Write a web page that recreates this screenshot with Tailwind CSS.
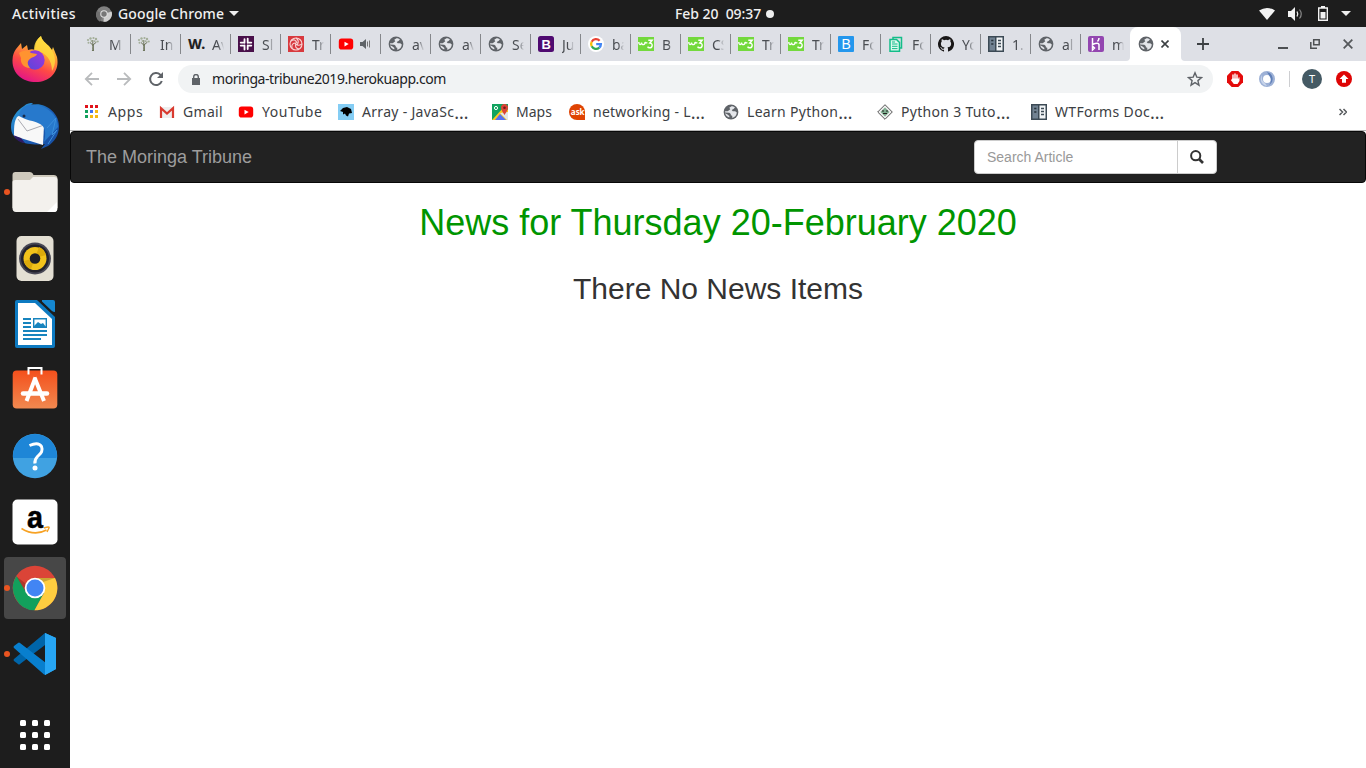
<!DOCTYPE html>
<html lang="en">
<head>
<meta charset="utf-8">
<title>The Moringa Tribune</title>
<script src="https://cdn.jsdelivr.net/npm/@tailwindcss/browser@4"></script>
</head>
<body class="w-[1366px] h-[768px] overflow-hidden bg-white font-['Noto_Sans',sans-serif]">
<svg class="hidden">
  <defs>
    <symbol id="globe" viewBox="0 0 16 16"><circle cx="8" cy="8" r="7.400" fill="#5f6368"/><path d="M8.500 2.200 6.300 3.700l1 1.500-2.600 2.100H2.100v1.200l4.200.2 1.500 1.200v1.300l1.400.6.200 2.100c2.600-.6 4.300-2.700 4.400-5.300l-1.600-1.300H9.700L8.700 6.100l1.800-1 1.500-1.600C11 2.700 9.700 2.200 8.500 2.200Z" fill="#e4e6ea"/><path d="M2.200 9.300c.5 2 1.900 3.600 4 4.300l.2-1.600-1.900-1.500Z" fill="#e4e6ea"/></symbol>
    <symbol id="tree" viewBox="0 0 16 16"><path d="M7.300 15c.8-2 .7-4 .4-6L5 6.500M8 9l3.500-3M7.800 9V4M8.500 15c-.4-2-.3-4-.2-6" stroke="#5c6547" stroke-width=".9" fill="none"/><g fill="#a3ae99"><circle cx="3" cy="4" r="1.100"/><circle cx="5.500" cy="2.500" r="1.200"/><circle cx="8.500" cy="2" r="1.100"/><circle cx="11" cy="3" r="1.200"/><circle cx="12.800" cy="5.500" r="1"/><circle cx="3.500" cy="6.800" r="1"/><circle cx="6.500" cy="5" r="1"/><circle cx="9.700" cy="5.300" r="1"/></g></symbol>
    <symbol id="yt" viewBox="0 0 16 16"><rect x=".8" y="2.600" width="14.400" height="11" rx="2.800" fill="#f00"/><path d="m6.500 5.800 4.200 2.300-4.200 2.300Z" fill="#fff"/></symbol>
    <symbol id="w3" viewBox="0 0 16 16"><rect y="1" width="16" height="14" fill="#73d93c"/><path d="M.8 6c0 3.300 2.300 3.500 2.700.5.300 3 3.600 2.800 3.600-.5Q7.800 7.500 9.300 6.500M10.300 4.200h3.900L11.800 7c3.600.2 2.800 5-.4 4.800-1 0-1.500-.5-1.800-1.200" stroke="#fff" stroke-width="1.400" fill="none"/></symbol>
    <symbol id="wtf" viewBox="0 0 16 16"><path d="M0 0h16v16H0Z" fill="#3c4a55"/><path d="M1.500 1.500h5.500v13H1.500Z" fill="#718292"/><path d="M8.500 1.500h6v13h-6Z" fill="#f1f4f6"/><path d="M3.200 4.500h2.200M3.200 8h2.200" stroke="#27323b" stroke-width="1.400"/><path d="M10 4.500h3M10 7.500h3M10 10.500h3" stroke="#3c4a55" stroke-width="1.500"/></symbol>
  </defs>
</svg>

<!-- system bar -->
<header class="flex h-[27px] items-center bg-[#1d1d1d] text-[14px] font-medium text-[#f0f0f0]">
  <span class="ml-3 w-[84px] pb-px tracking-[0.35px]">Activities</span>
  <svg class="size-4 shrink-0" viewBox="0 0 16 16"><circle cx="8" cy="8" r="7.700" fill="#818181"/><path d="M8 8 15.600 5.500A7.700 7.700 0 0 1 7.500 15.700Z" fill="#cfcfcf"/><path d="M8 8 4 15.700A7.700 7.700 0 0 1 1 5Z" fill="#707070"/><circle cx="8" cy="8" r="3.800" fill="#ddd"/><circle cx="8" cy="8" r="2.700" fill="#777"/></svg>
  <span class="ml-[6px] w-[107px] whitespace-nowrap pb-px tracking-[0.12px]">Google Chrome</span>
  <svg class="ml-1 h-[5px] w-[10px]" viewBox="0 0 10 5"><path d="M0 0h10L5 5Z" fill="#eee"/></svg>
  <span class="ml-[436px] w-[91px] whitespace-pre pb-px tracking-[-0.05px]">Feb 20  09:37</span>
  <i class="size-2 rounded-full bg-[#eee]"></i>
  <svg class="ml-[485px] h-[12px] w-[16px]" viewBox="0 0 16 12"><path d="M0 2.500Q8-2.500 16 2.500L8 12Z" fill="#f2f2f2"/></svg>
  <svg class="ml-[13px] h-[14px] w-[16px]" viewBox="0 0 16 14"><path d="M0 4h3l4-4v14L3 10H0Z" fill="#f2f2f2"/><path d="M9 4.500q1.500 2.500 0 5" stroke="#eee" fill="none" stroke-width="1.300"/><path d="M11.500 2.500q3.500 4.500 0 9" stroke="#888" fill="none" stroke-width="1.200"/></svg>
  <svg class="ml-[14px] h-[15px] w-[10px]" viewBox="0 0 10 15"><path d="M.7 2h8.600v12.300H.7Z" stroke="#f2f2f2" stroke-width="1.400" fill="none"/><path d="M3 0h4v2H3ZM2.500 6h5v6.500h-5Z" fill="#f2f2f2"/></svg>
  <svg class="ml-[13px] h-[5px] w-[10px]" viewBox="0 0 10 5"><path d="M0 0h10L5 5Z" fill="#eee"/></svg>
</header>

<div class="flex h-[741px]">
  <!-- dock -->
  <aside class="flex w-[70px] shrink-0 flex-col bg-[#1d1d1d] [&>div]:relative [&>div]:flex [&>div]:h-[66px] [&>div]:items-center [&>div]:justify-center [&_i]:absolute [&_i]:left-1 [&_i]:size-[6px] [&_i]:rounded-full [&_i]:bg-[#e95420]">
    <div><svg class="size-12" viewBox="0 0 48 48"><defs><linearGradient id="ff" x1=".8" y1="0" x2=".35" y2="1"><stop stop-color="#fff44f"/><stop offset=".35" stop-color="#ffa436"/><stop offset=".65" stop-color="#ff4a45"/><stop offset="1" stop-color="#e31587"/></linearGradient><linearGradient id="ff2" x1="0" x2="1" y1="1" y2="0"><stop stop-color="#5547dd"/><stop offset="1" stop-color="#a535d8"/></linearGradient></defs><path d="M5 13 10 7l1 6 5-4 1 5c3-1 5-1 7 0 0-7 2-11 6-14 1 5 5 7 8 10l3 4 1-3 4 10c3 14-7 25-21 25S1 37 1.500 24C1.700 19 3 16 5 13Z" fill="url(#ff)"/><path d="M23 14c0-7 3-11 7-14 1 5 5 7 8 11 8 8 7 18 3 24 0-10-5-19-18-21Z" fill="#ffdc3d" opacity=".8"/><circle cx="24" cy="24" r="9.700" fill="url(#ff2)"/><path d="M8 17c4-3 9-3 12 0l6 1c-1 3-5 3-7 5-3 2-3 5 0 9-7 0-10-6-9-10Z" fill="#ff9330"/></svg></div>
    <div><svg class="size-12" viewBox="0 0 48 48"><defs><linearGradient id="tb" x1="0" x2="1" y1="0" y2="1"><stop stop-color="#2fa5dd"/><stop offset=".5" stop-color="#1b5fb8"/><stop offset="1" stop-color="#164a9c"/></linearGradient></defs><path d="M13 4c3-3 6-3 9-3l-2 2C33-1 48 10 48 24c0 10-5 16-11 20l-7 3 4-5C20 44 0 41 0 25 0 16 6 8 13 4Z" fill="url(#tb)"/><path d="M6 15c6-4 18-3 27 8l-1 20L3 34C3 25 3 20 6 15Z" fill="#f8f8f8"/><path d="M7 17 16 29l17-6" stroke="#a8a8b0" fill="none"/><path d="M8 14C9 5 17 1 25 3c12 2 22 10 22 22L33 40c2-8 2-15-4-18-7-4-13-3-21-8Z" fill="#2779cc"/><circle cx="13" cy="14" r="1.500" fill="#172a4b"/><path d="M2 33q5 8 12 8l-4-5Z" fill="#2d1a63"/><path d="m36 26 9-10-4 17 5-5-9 14" stroke="#3b8fdc" fill="none"/></svg></div>
    <div><i></i><svg class="size-12" viewBox="0 0 48 48"><path d="M1.500 7q0-3 3-3h14q3 0 4 3h20q4 0 4 4v29h-45Z" fill="#cec9bc"/><path d="M1.500 14q0-2 3-2H19l3-3h21q3.500 0 3.500 3v28q0 4-3.500 4H5q-3.500 0-3.500-4Z" fill="#f3f1ed"/><path d="M36 44h7q3 0 3-3v-7Z" fill="#fff"/></svg></div>
    <div><svg class="size-12" viewBox="0 0 48 48"><rect x="5.500" y="2" width="37" height="45" rx="5" fill="#e3dfd3"/><circle cx="24" cy="24.500" r="15.900" fill="#474754"/><circle cx="24" cy="24.500" r="14" fill="#22222c"/><circle cx="24" cy="24.500" r="11.500" fill="#f2c21b"/><path d="m24 24-11 3a11.500 11.500 0 0 0 7 8Zm0 0 11-3a11.500 11.500 0 0 0-7-8Z" fill="#dcaa0c"/><circle cx="24" cy="24.500" r="5.300" fill="#202027"/></svg></div>
    <div><svg class="size-12" viewBox="0 0 48 48"><path d="M6 0h20l18 17v29q0 2-2 2H6q-2 0-2-2V2q0-2 2-2Z" fill="#0d7ac1"/><path d="M7 3h17l17 16v26H7Z" fill="#fff"/><path d="M31 0h11q2 0 2 2v10q-2 0-3-1L31 1.500Z" fill="#1587d0"/><path d="M12 19h8m-8 4h8m-8 4h8m-8 4h24m-24 4h24m-24 4h18" stroke="#1784be" stroke-width="2"/><path d="M22.700 18.700h12.600v8.600H22.700Z" stroke="#1784be" stroke-width="1.400" fill="none"/><path d="m23 26 4-4 3 2 2-1 3 4H23Z" fill="#1784be"/></svg></div>
    <div><svg class="size-12" viewBox="0 0 48 48"><defs><linearGradient id="sw" x2="0" y2="1"><stop stop-color="#f4501c"/><stop offset="1" stop-color="#f18950"/></linearGradient></defs><rect x="1.700" y="4.500" width="44.600" height="38" rx="4" fill="url(#sw)"/><path d="M17.500 8.500V2h13v6.500" stroke="#fff" stroke-width="2" fill="none"/><path d="M24.500 11.500 15.500 35m8-23.500L33 35" stroke="#fff" stroke-width="4"/><path d="M12 27.500h24" stroke="#fff" stroke-width="4.500" stroke-linecap="round"/></svg></div>
    <div><svg class="size-12" viewBox="0 0 48 48"><circle cx="24" cy="24" r="22.200" fill="#40a2e2"/><path d="M2 24a22 22 0 0 1 44 0l-.5 2H2.200Z" fill="#1e86d7"/><path d="M18.500 13.500q9-4 12 1c2 5-1 7-4 10-2 2-3 4-2.500 7" stroke="#fff" stroke-width="3" fill="none"/><circle cx="24" cy="36" r="2.500" fill="#fff"/></svg></div>
    <div><svg class="size-12" viewBox="0 0 48 48"><rect x="1.500" y="1.500" width="45" height="45" rx="5" fill="#fff"/><text x="16" y="29.500" font-family="Liberation Sans" font-size="31" font-weight="700" textLength="16" lengthAdjust="spacingAndGlyphs" stroke="#000" stroke-width=".5">a</text><path d="M10.500 30.500q13 8 25 1.500" stroke="#f7a224" stroke-width="1.600" fill="none"/><path d="M33 30q6-2 5 0l-2 4" stroke="#f7a224" stroke-width="1.400" fill="none"/></svg></div>
    <div><span class="flex size-[62px] items-center justify-center rounded-[4px] bg-[#474747]"><svg class="size-12" viewBox="0 0 48 48"><circle cx="24" cy="24" r="22.300" fill="#db4437"/><path d="M5.500 12A22.300 22.300 0 0 0 23.500 46.300L33 29 15.500 29Z" fill="#12a05c"/><path d="M24 14h20a22.300 22.300 0 0 1-20.500 32.300L33 29Z" fill="#fecd40"/><path d="M5.500 12.500 15.500 29l1-8ZM24 14h20l-12 4Z" fill="#0003"/><circle cx="24" cy="24" r="10.300" fill="#fff"/><circle cx="24" cy="24" r="8.500" fill="#4285f4"/></svg></span><i></i></div>
    <div><i></i><svg class="size-12" viewBox="0 0 48 48"><path d="M34 3v12L9 34q-1 1-2 0l-4-3q-1-1 0-2Z" fill="#0065a9"/><path d="M34 3 45 8v31l-11 6Z" fill="#27a6f4"/><path d="M35 45V33L9 13q-1-1-2 0l-4 3q-1 1 0 2L33 44.500Z" fill="#087fce"/><path d="M34 3 45 8v31l-11 6Z" fill="#27a6f4"/></svg></div>
    <div class="mt-[15px]"><span class="grid grid-cols-3 gap-[6px] [&>b]:size-[6px] [&>b]:rounded-[1.500px] [&>b]:bg-white"><b></b><b></b><b></b><b></b><b></b><b></b><b></b><b></b><b></b></span></div>
  </aside>

  <main class="w-[1296px]">
    <!-- tab strip -->
    <nav class="flex h-[34px] items-center bg-[#dee0e6] pl-[11px] text-[14px] text-[#4a4d52] [&>div]:flex [&>div]:h-5 [&>div]:w-[50px] [&>div]:shrink-0 [&>div]:items-center [&>div]:border-r [&>div]:border-[#85878b] [&>div]:pl-[7px] [&>div>svg]:size-4 [&>div>svg]:shrink-0 [&>div>span]:ml-2 [&>div>span]:w-[12px] [&>div>span]:overflow-hidden [&>div>span]:whitespace-nowrap [&>div>span]:mask-r-from-50% [&>div>span]:mask-r-to-100%">
      <div><svg class="-ml-[3px]"><use href="#tree"/></svg><span class="min-w-[14px]">M</span></div>
      <div><svg class="-ml-[2px]"><use href="#tree"/></svg><span class="min-w-[14px]">In</span></div>
      <div><b class="w-4 text-[14px] font-extrabold leading-none text-[#222]">W.</b><span>Av</span></div>
      <div><svg viewBox="0 0 16 16"><path d="M0 0h16v16H0Z" fill="#49104a"/><path d="M6.500 3.200v3.600M9.700 2.600v4.200M6.500 9.500v4M9.700 9.500v3.600M2.700 6.600h3.800M9.700 6.600h3.600M2.700 9.600h3.800M9.700 9.600h3.600" stroke="#fff" stroke-width="1.800" stroke-linecap="round"/></svg><span>Sl</span></div>
      <div><svg viewBox="0 0 16 16"><path d="M0 0h16v16H0Z" fill="#d8393e"/><g fill="none" stroke="#f8d3d3" stroke-width="1.100"><circle cx="8" cy="8" r="6"/><path d="M8 2q4 3 1 7M14 8q-5 3-7-1M11 13q-5-1-3-6M4 12q-1-5 4-5M3 5q4-3 6 2"/></g></svg><span>Tr</span></div>
      <div><svg><use href="#yt"/></svg><svg class="ml-[5px]" viewBox="0 0 16 16"><path d="M1 6h2.500L7 3v10L3.500 10H1Z" fill="#5f6368"/><path d="M8.500 5.500v5m2-6v7" stroke="#777"/></svg></div>
      <div><svg><use href="#globe"/></svg><span>av</span></div>
      <div><svg><use href="#globe"/></svg><span>av</span></div>
      <div><svg><use href="#globe"/></svg><span>Se</span></div>
      <div><svg viewBox="0 0 16 16"><rect width="16" height="16" rx="2.500" fill="#4f0a70"/><text x="3.400" y="12.800" font-family="Liberation Sans" font-size="13" font-weight="700" fill="#fff">B</text></svg><span>Ju</span></div>
      <div><svg viewBox="0 0 16 16"><circle cx="8" cy="8" r="8" fill="#fff"/><g fill="none" stroke-width="2.300"><path d="M11.600 4.700A4.900 4.900 0 0 0 3.700 5.700" stroke="#ea4335"/><path d="M3.700 5.700a4.900 4.900 0 0 0 0 4.600" stroke="#fbbc05"/><path d="M3.700 10.300a4.900 4.900 0 0 0 7.600 1.300" stroke="#34a853"/><path d="M11.300 11.600A4.900 4.900 0 0 0 12.900 8.100H8.200" stroke="#4285f4"/></g></svg><span>ba</span></div>
      <div><svg><use href="#w3"/></svg><span>B</span></div>
      <div><svg><use href="#w3"/></svg><span>CS</span></div>
      <div><svg><use href="#w3"/></svg><span>Tr</span></div>
      <div><svg><use href="#w3"/></svg><span>Tr</span></div>
      <div><svg viewBox="0 0 16 16"><rect width="16" height="16" rx="1" fill="#2497ed"/><text x="3.500" y="13" font-family="Liberation Sans" font-size="14" fill="#fff">B</text></svg><span>Fo</span></div>
      <div><svg viewBox="0 0 16 16"><path d="M5 3V1.500h8.500V12H12" stroke="#13bd89" stroke-width="1.500" fill="none"/><path d="M2 3.500h6.500l3 3v8.700H2Z" stroke="#13bd89" stroke-width="1.500" fill="#dff8ee"/><path d="M4 8h5.500M4 10.300h5.500M4 12.600h5.500M4 6h3" stroke="#13bd89"/></svg><span>Fo</span></div>
      <div><svg viewBox="0 0 16 16"><path d="M8 0a8 8 0 0 0-2.530 15.590c.4.070.55-.17.55-.38v-1.490c-2.230.48-2.700-.95-2.700-.95-.36-.92-.89-1.170-.89-1.170-.73-.5.060-.49.060-.49.800.060 1.230.83 1.230.83.710 1.220 1.870.87 2.330.66.070-.52.280-.87.510-1.070-1.780-.2-3.640-.89-3.640-3.950 0-.87.310-1.590.82-2.150-.08-.2-.36-1.020.08-2.120 0 0 .67-.21 2.200.82a7.600 7.600 0 0 1 4 0c1.530-1.040 2.200-.82 2.200-.82.440 1.100.160 1.920.080 2.120.510.560.820 1.270.820 2.150 0 3.070-1.870 3.750-3.650 3.950.290.250.540.730.540 1.480v2.200c0 .210.150.460.550.380A8 8 0 0 0 8 0Z" fill="#191717"/></svg><span>Yo</span></div>
      <div><svg><use href="#wtf"/></svg><span>1.</span></div>
      <div><svg><use href="#globe"/></svg><span>al</span></div>
      <section class="flex h-5 w-[49px] shrink-0 items-center pl-[7px]"><svg class="size-4 shrink-0" viewBox="0 0 16 16"><rect width="16" height="16" rx="2" fill="#9346b0"/><path d="M4.500 2v6.500q6-2.500 6.500 0V14M11 2q0 2-1.500 3.500M4.500 10v4l2-2Z" stroke="#fff" stroke-width="1.500" fill="none"/></svg><span class="ml-2 w-3 overflow-hidden mask-r-from-50% mask-r-to-100%">m</span></section>
      <section class="relative flex h-[34px] w-[51px] shrink-0 items-center rounded-t-[8px] bg-white pl-2">
        <svg class="absolute -left-1 bottom-0 size-1" viewBox="0 0 4 4"><path d="M4 0v4H0Q4 4 4 0Z" fill="#fff"/></svg><svg class="absolute -right-1 bottom-0 size-1" viewBox="0 0 4 4"><path d="M0 0v4h4Q0 4 0 0Z" fill="#fff"/></svg>
        <svg class="size-4"><use href="#globe"/></svg><svg class="ml-[7px] size-2" viewBox="0 0 8 8"><path d="m.5.500 7 7m0-7-7 7" stroke="#3c4043" stroke-width="1.600"/></svg>
      </section>
      <svg class="ml-4 size-3 shrink-0" viewBox="0 0 12 12"><path d="M6 0v12M0 6h12" stroke="#3c4043" stroke-width="1.800"/></svg>
      <svg class="ml-[69px] h-[10px] w-[10px] shrink-0" viewBox="0 0 10 10"><path d="M0 9h10" stroke="#4d5053" stroke-width="2"/></svg>
      <svg class="ml-[22px] h-[10px] w-[10px] shrink-0" viewBox="0 0 10 10"><path d="M3.700.8h5.500v5H3.700ZM.8 3v6.200H7" stroke="#4d5053" stroke-width="1.500" fill="none"/></svg>
      <svg class="ml-[23px] size-[10px] shrink-0" viewBox="0 0 10 10"><path d="m.7.700 8.600 8.600m0-8.600L.7 9.300" stroke="#55585b" stroke-width="1.800"/></svg>
    </nav>
    <!-- address bar -->
    <div class="flex h-9 items-center pl-[14px]">
      <svg class="size-4 shrink-0" viewBox="0 0 16 16"><path d="M15 8H2m6-6.200L1.800 8 8 14.200" stroke="#b9bbbd" stroke-width="1.800" fill="none"/></svg>
      <svg class="ml-4 size-4 shrink-0" viewBox="0 0 16 16"><path d="M1 8h13M8 1.800 14.200 8 8 14.200" stroke="#b9bbbd" stroke-width="1.800" fill="none"/></svg>
      <svg class="ml-4 size-4 shrink-0" viewBox="0 0 16 16"><path d="M13.800 10A6 6 0 1 1 12.300 3.700L14 5.500" stroke="#5f6368" stroke-width="2" fill="none"/><path d="M15 1v6H9Z" fill="#5f6368"/></svg>
      <div class="ml-[14px] flex h-7 w-[1035px] shrink-0 items-center rounded-full bg-[#f1f3f4] pl-[14px] pr-[10px]">
        <svg class="h-[11px] w-[8px]" viewBox="0 0 8 11"><path d="M0 4h8v7H0Z" fill="#5f6368"/><path d="M1.700 4V2.800a2.300 2.300 0 0 1 4.600 0V4" stroke="#5f6368" stroke-width="1.400" fill="none"/></svg>
        <span class="ml-3 pb-[2px] text-[14px] tracking-[-0.44px] text-[#202124]">moringa-tribune2019.herokuapp.com</span>
        <svg class="ml-auto size-4" viewBox="0 0 16 16"><path d="m8 1.800 1.800 4.300 4.700.4-3.600 3.100 1.100 4.600L8 11.700l-4 2.500 1.100-4.600-3.600-3.100 4.700-.4Z" stroke="#5f6368" stroke-width="1.400" fill="none"/></svg>
      </div>
      <svg class="ml-[14px] size-4 shrink-0" viewBox="0 0 16 16"><path d="M4.700 0h6.600L16 4.700v6.600L11.300 16H4.700L0 11.300V4.700Z" fill="#e40b0b"/><path d="M6 8V4M8 8V3M10 8V4" stroke="#fff" stroke-width="1.400" stroke-linecap="round"/><path d="M5.300 7.500h6.400V6l.8.500v3.500l-2 3H6.800L3.800 9l.8-.5Z" fill="#fff"/></svg>
      <svg class="ml-4 size-4 shrink-0" viewBox="0 0 16 16"><circle cx="8" cy="8" r="6" stroke="#9db1d6" stroke-width="4" fill="#fff"/><path d="M8 1a7 7 0 0 1 2 13q3-4 1-8Z" fill="#5f7fb8"/><path d="M8 15a7 7 0 0 1-5-11q-1 6 3 8Z" fill="#c7d4ea"/></svg>
      <span class="ml-[14px] h-4 w-px bg-[#cdced1]"></span>
      <span class="ml-3 flex size-5 items-center justify-center rounded-full bg-[#455a64] text-[11px] text-white">T</span>
      <svg class="ml-[14px] size-4 shrink-0" viewBox="0 0 16 16"><circle cx="8" cy="8" r="8" fill="#de0505"/><path d="m8 3.500 4.500 4.500H10v3.700H6V8H3.500Z" fill="#fff"/></svg>
    </div>
    <!-- bookmarks -->
    <div class="flex h-[34px] items-center border-b border-[#b5b5b5] pb-1 pl-[14px] text-[14px] text-[#3c4043] [&>div]:flex [&>div]:items-center [&>div]:whitespace-nowrap [&>div>svg]:mr-2 [&>div>svg]:size-4 [&>div>svg]:shrink-0 [&_b]:text-[18px] [&_b]:font-normal [&_b]:leading-5">
      <div class="w-[75px] tracking-[0.6px]"><svg viewBox="0 0 16 16"><path d="M1 1h3v3H1Zm5 0h3v3H6Zm5 0h3v3h-3Z" fill="#e0131b"/><path d="M1 6h3v3H1Zm0 5h3v3H1Z" fill="#12a05c"/><path d="M6 6h3v3H6Z" fill="#4272f0"/><path d="M11 6h3v3h-3ZM6 11h3v3H6Zm5 0h3v3h-3Z" fill="#f5b912"/></svg>Apps</div>
      <div class="w-[79px] tracking-[0.3px]"><svg viewBox="0 0 16 16"><path d="M1 3h14v11H1Z" fill="#eee"/><path d="M2 14V4.200l6 5.300 6-5.300V14" stroke="#d93a2f" stroke-width="2.200" fill="none"/></svg>Gmail</div>
      <div class="w-[100px] tracking-[0.55px]"><svg><use href="#yt"/></svg>YouTube</div>
      <div class="w-[154px] tracking-[0.3px]"><svg viewBox="0 0 16 16"><path d="M0 0h16v16H0Z" fill="#84cdf4"/><path d="m2 7 3-3 4-1 4 2 1 4-3 .5-1 3-2-1-1-2-2 1V8Z" fill="#000"/></svg>Array - JavaSc<b>…</b></div>
      <div class="w-[77px]"><svg viewBox="0 0 16 16"><path d="M0 0h16v16H0Z" fill="#10a35e"/><path d="M0 16 12 3l4 3v10Z" fill="#fbc81f"/><path d="m3 16 5-6 6 6Z" fill="#566ff1"/><path d="m8 9 7 7h1V8Z" fill="#e4e6e8"/><path d="M12.500 0a3.500 3.500 0 0 1 3.500 4q-.5 3-3.500 7Q9.500 7 9 4a3.500 3.500 0 0 1 3.500-4Z" fill="#dc4437"/><circle cx="12.500" cy="3.800" r="1.300" fill="#6f1a18"/><circle cx="4" cy="4" r="1.600" stroke="#fff" fill="none"/></svg>Maps</div>
      <div class="w-[154px] tracking-[0.25px]"><svg viewBox="0 0 16 16"><path d="M8 0a8 8 0 0 1 8 8v8H8A8 8 0 0 1 8 0Z" fill="#df4303"/><text x="1.800" y="10.800" font-family="Open Sans" font-weight="700" font-size="8" letter-spacing="0" fill="#fff">ask</text></svg>networking - L<b>…</b></div>
      <div class="w-[154px] tracking-[0.3px]"><svg><use href="#globe"/></svg>Learn Python<b>…</b></div>
      <div class="w-[154px] tracking-[0.3px]"><svg viewBox="0 0 16 16"><path d="m8 .7 7.300 7.300L8 15.300.7 8Z" stroke="#555" fill="#eee"/><path d="M8 3.500 12.500 8 8 12.500 3.500 8Z" fill="#7fae90"/><path d="M5 7h2m2 0h2M6 9.500h4" stroke="#222" stroke-width="1.200"/></svg>Python 3 Tuto<b>…</b></div>
      <div class="w-[154px] tracking-[0.35px]"><svg><use href="#wtf"/></svg>WTForms Doc<b>…</b></div>
      <svg class="ml-[154px] size-2" viewBox="0 0 8 8"><path d="m.5 1 3 3-3 3m4-6 3 3-3 3" stroke="#55585b" stroke-width="1.500" fill="none"/></svg>
    </div>
    <!-- page -->
    <div class="font-['Liberation_Sans',Arial,sans-serif]">
      <div class="flex h-[52px] items-center rounded-[4px] border border-[#080808] bg-[#222] pl-[15px]">
        <span class="w-[888px] text-[18px] leading-5 text-[#9d9d9d]">The Moringa Tribune</span>
        <div class="flex h-[34px] w-[243px] overflow-hidden rounded-[4px] border border-[#ccc] bg-white">
          <span class="w-[203px] border-r border-[#ccc] pl-3 text-[14px] leading-[33px] text-[#999]">Search Article</span>
          <span class="flex flex-1 items-center justify-center"><svg class="size-[14px]" viewBox="0 0 14 14"><circle cx="5.700" cy="5.700" r="4.600" stroke="#333" stroke-width="2" fill="none"/><path d="m9 9 4 4" stroke="#333" stroke-width="2.600"/></svg></span>
        </div>
      </div>
      <h1 class="mt-5 text-center text-[36px] leading-[40px] text-[#009500]">News for Thursday 20-February 2020</h1>
      <h2 class="mt-[29px] text-center text-[30px] leading-[33px] text-[#333]">There No News Items</h2>
    </div>
  </main>
</div>
</body>
</html>
